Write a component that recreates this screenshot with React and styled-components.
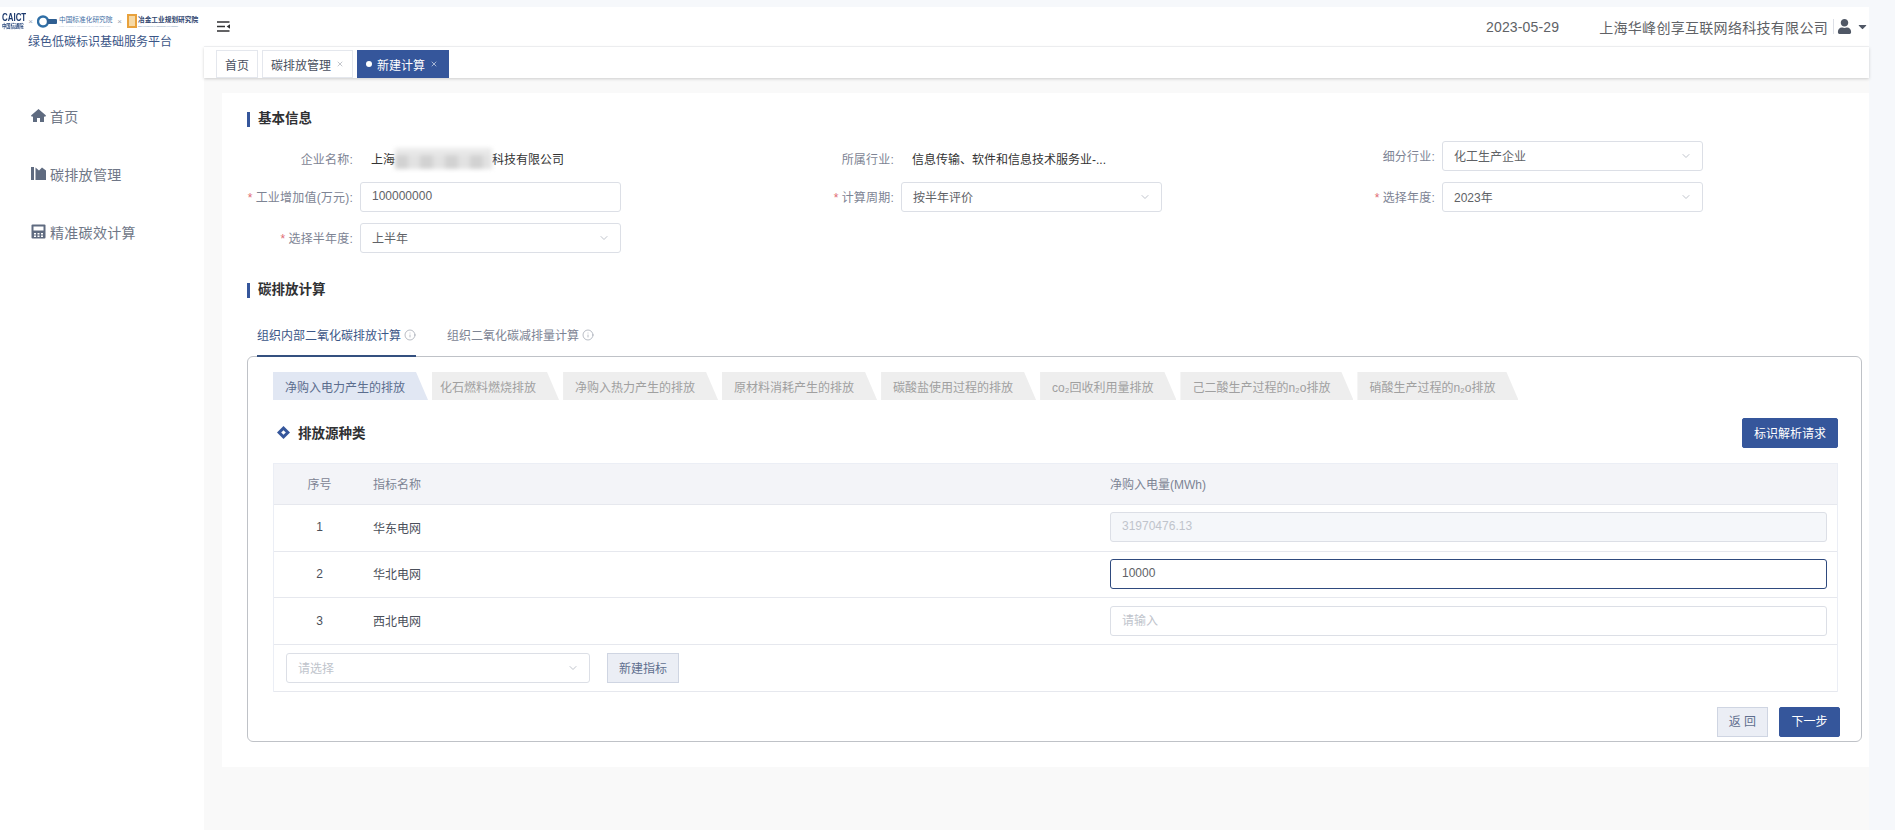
import React from "react";
import styled, { createGlobalStyle } from "styled-components";
import { ChevronDown, Info, X } from "lucide-react";
import { FaCaretDown, FaUser } from "react-icons/fa";

const PRIMARY = "#35569b";
const FONT = '"Liberation Sans", "Noto Sans CJK SC", sans-serif';

const GlobalStyle = createGlobalStyle`
  html, body {
    margin: 0;
    padding: 0;
    font-family: ${FONT};
    background: #f6f8fb;
  }
  * {
    box-sizing: border-box;
  }
`;

const Shell = styled.div`
  display: grid;
  grid-template-columns: 204px 1fr;
  height: 830px;
  padding-top: 7px;
  overflow: hidden;
  background: #f6f8fb;
`;

const Sidebar = styled.aside`
  background: #fff;
  padding-top: 5px;
  overflow: hidden;
`;

const LogoRow = styled.div`
  display: flex;
  align-items: center;
  height: 18px;
  padding-left: 2px;
`;

const Caict = styled.div`
  width: 22px;
  flex: none;
  color: #1c3a6e;
  font-size: 11px;
  font-weight: 700;
  line-height: 10px;
  white-space: nowrap;
  transform: scaleX(0.72);
  transform-origin: left center;
`;

const CaictSub = styled.div`
  font-size: 6px;
  line-height: 8px;
  color: #28477c;
`;

const LogoTimes = styled.span`
  width: 13px;
  flex: none;
  text-align: center;
  font-size: 8px;
  color: #9aa4b5;
`;

const Institute = styled.div`
  width: 54px;
  flex: none;
  margin-left: 2px;
  font-family: "Liberation Serif", "Noto Sans CJK SC", serif;
  font-size: 6.7px;
  line-height: 9px;
  color: #3c6da3;
  white-space: nowrap;
`;

const InstituteSub = styled.div`
  font-size: 2.1px;
  line-height: 4px;
  color: #8aa2bd;
`;

const Metallurgy = styled.div`
  width: 60px;
  flex: none;
  margin-left: 1px;
  font-size: 6.7px;
  font-weight: 700;
  line-height: 9px;
  color: #30456e;
  white-space: nowrap;
`;

const Brand = styled.div`
  margin-top: 3px;
  padding-left: 28px;
  font-size: 12px;
  line-height: 18px;
  color: #3b5687;
  white-space: nowrap;
`;

const Nav = styled.nav`
  display: flex;
  flex-direction: column;
  gap: 37px;
  margin-top: 54px;
  padding-left: 31px;
`;

const NavItem = styled.div`
  display: flex;
  align-items: center;
  gap: 4px;
  height: 21px;
  font-size: 14px;
  letter-spacing: 0.3px;
  color: #6f7787;
  svg {
    width: 15px;
    height: 15px;
    color: #5f6b80;
    flex: none;
  }
`;

const Main = styled.main`
  display: flex;
  flex-direction: column;
  min-width: 0;
  margin-right: 26px;
  background: #f9f9f9;
`;

const Header = styled.header`
  display: flex;
  align-items: center;
  height: 40px;
  padding-left: 13px;
  background: #fff;
  border-bottom: 1px solid #f3f4f6;
  color: #606266;
  font-size: 14px;
`;

const HeaderDate = styled.span`
  margin-left: auto;
  letter-spacing: 0.15px;
`;

const Company = styled.span`
  margin-left: 40px;
  letter-spacing: 0.3px;
`;

const UserMenu = styled.div`
  display: flex;
  align-items: center;
  height: 15px;
  margin-left: 5px;
  padding-left: 3px;
  border-left: 1px solid #dcdfe6;
  color: #505866;
`;

const Caret = styled.span`
  display: flex;
  margin-left: 4px;
`;

const TabBar = styled.div`
  display: flex;
  align-items: flex-end;
  gap: 4px;
  height: 31px;
  padding-left: 12px;
  background: #fff;
  box-shadow: 0 1px 3px rgba(0, 0, 0, 0.18);
`;

const PageTab = styled.div`
  display: flex;
  align-items: center;
  gap: 5px;
  height: 28px;
  padding: 0 ${props => (props.$active ? "10px" : "8px")} 0 8px;
  border: 1px solid ${props => (props.$active ? PRIMARY : "#e4e7ed")};
  background: ${props => (props.$active ? PRIMARY : "#fff")};
  color: ${props => (props.$active ? "#fff" : "#495060")};
  font-size: 12px;
  white-space: nowrap;
`;

const Dot = styled.i`
  width: 6px;
  height: 6px;
  border-radius: 50%;
  background: #fff;
`;

const Card = styled.section`
  margin: 15px 0 0 18px;
  padding: 19px 7px 25px 25px;
  background: #fff;
`;

const SectionTitle = styled.h2`
  margin: ${props => (props.$spaced ? "30px" : "0")} 0 0;
  padding: 0 0 2px 8px;
  border-left: 3px solid ${PRIMARY};
  font-size: 13.5px;
  font-weight: 700;
  line-height: 13px;
  color: #303133;
`;

const FormGrid = styled.div`
  display: grid;
  grid-template-columns: repeat(3, 541px);
  row-gap: 11px;
  margin-top: 14px;
`;

const Field = styled.div`
  display: flex;
  align-items: center;
  height: 30px;
`;

const FieldLabel = styled.label`
  width: 106px;
  margin-right: 7px;
  flex: none;
  text-align: right;
  font-size: 12px;
  letter-spacing: 0.2px;
  color: #7d8494;
  white-space: nowrap;
  transform: translateY(${props => (props.$text ? "2px" : "-1px")});
`;

const Star = styled.span`
  margin-right: 3px;
  color: #e06c75;
`;

const FieldText = styled.div`
  display: flex;
  align-items: center;
  padding-left: 11px;
  font-size: 12px;
  color: #333;
  white-space: nowrap;
  transform: translateY(2px);
`;

const Mosaic = styled.span`
  display: inline-block;
  width: 97px;
  height: 21px;
  background:
    linear-gradient(#e9e9e9 0 35%, transparent 35%),
    repeating-linear-gradient(90deg, #d2d2d2 0 13px, #e2e2e2 13px 25px);
  filter: blur(2px);
`;

const Control = styled.div`
  display: flex;
  align-items: center;
  justify-content: space-between;
  width: ${props => props.$width || "261px"};
  height: 30px;
  padding: 0 10px 2px 11px;
  border: 1px solid ${props => (props.$focused ? "#2f4a7e" : "#dcdfe6")};
  border-radius: 3px;
  background: ${props => (props.$disabled ? "#f5f7fa" : "#fff")};
  color: ${props => (props.$muted ? "#c0c4cc" : "#606266")};
  font-size: 12px;
  svg {
    margin-bottom: -2px;
    color: #c0c4cc;
  }
`;

const InnerTabs = styled.div`
  display: flex;
  gap: 31px;
  height: 40px;
  margin-top: 19px;
  padding-left: 10px;
`;

const InnerTab = styled.div`
  display: flex;
  align-items: center;
  gap: 3px;
  position: relative;
  z-index: 1;
  height: 40px;
  padding-bottom: 3px;
  border-bottom: 2px solid ${props => (props.$active ? "#34507f" : "transparent")};
  color: ${props => (props.$active ? "#3b5687" : "#7d8494")};
  font-size: 12px;
  svg {
    color: #8a919e;
  }
`;

const Panel = styled.div`
  margin-top: -1px;
  padding: 15px 23px 4px 25px;
  border: 1px solid #bfc2c7;
  border-radius: 6px;
`;

const StepTabs = styled.div`
  display: flex;
  gap: 4px;
`;

const StepTab = styled.div`
  height: 28px;
  padding: 0 23px 0 ${props => props.$left || 12}px;
  background: ${props => (props.$active ? "#e1e7f3" : "#eeeeee")};
  clip-path: polygon(0 0, calc(100% - 12px) 0, 100% 100%, 0 100%);
  color: ${props => (props.$active ? "#5b6d8e" : "#a0a0a0")};
  font-size: 12px;
  line-height: 32px;
  white-space: nowrap;
`;

const SourceBar = styled.div`
  display: flex;
  align-items: center;
  justify-content: space-between;
  margin-top: 18px;
`;

const SourceTitle = styled.div`
  display: flex;
  align-items: center;
  gap: 8px;
  padding: 0 0 2px 4px;
  font-size: 13.5px;
  font-weight: 700;
  color: #303133;
`;

const Button = styled.button`
  height: 30px;
  padding: 0 ${props => props.$pad || 11}px 2px;
  border: 1px solid ${props => (props.$ghost ? "#cfd5e2" : PRIMARY)};
  border-radius: ${props => (props.$ghost ? "0" : "2px")};
  background: ${props => (props.$ghost ? "#ebeef5" : PRIMARY)};
  color: ${props => (props.$ghost ? "#5f6f8f" : "#fff")};
  font-family: ${FONT};
  font-size: 12px;
  white-space: nowrap;
`;

const Table = styled.div`
  margin-top: 15px;
  border: 1px solid #ebeef5;
  border-bottom: 0;
`;

const Row = styled.div`
  display: grid;
  grid-template-columns: 91px 735px 1fr;
  align-items: center;
  height: ${props => (props.$head ? "41px" : "46.67px")};
  padding-bottom: 1px;
  border-bottom: 1px solid #e6e8ee;
  background: ${props => (props.$head ? "#f3f4f8" : "#fff")};
  color: ${props => (props.$head ? "#7d8494" : "#4a4f5a")};
  font-size: 12px;
`;

const IndexCell = styled.div`
  text-align: center;
`;

const NameCell = styled.div`
  padding-left: 8px;
`;

const ValueCell = styled.div`
  padding: 0 10px;
`;

const AddRow = styled.div`
  display: flex;
  align-items: center;
  gap: 17px;
  height: 47px;
  padding: 1px 0 0 12px;
  border-bottom: 1px solid #e6e8ee;
`;

const Footer = styled.div`
  display: flex;
  justify-content: flex-end;
  gap: 11px;
  margin: 15px -2px 0 0;
`;

const OrangeMark = styled.span`
  width: 10px;
  height: 14px;
  flex: none;
  margin-left: 1px;
  border: 2px solid #e8a13c;
  background: #f6d9a6;
`;

const HamburgerIcon = () => (
  <svg width="13" height="11" viewBox="0 0 13 11" fill="none">
    <path d="M0 1h12.5M0 5.5h8M0 10h12.5" stroke="#303133" strokeWidth="1.6" />
    <path d="M13 3.2v4.6L9.6 5.5z" fill="#303133" />
  </svg>
);

const HomeIcon = () => (
  <svg viewBox="0 0 15 15" fill="currentColor">
    <path d="M7.5 1L0 7.5 1 9l1-.8V14h4v-4h3v4h4V8.2l1 .8 1-1.5z" />
  </svg>
);

const FactoryIcon = () => (
  <svg viewBox="0 0 15 15" fill="currentColor">
    <rect x="0" y="1" width="3" height="13" />
    <path d="M4.5 14V1.5L8 4.5 11 1.5l4 3V14z" />
  </svg>
);

const CalculatorIcon = () => (
  <svg viewBox="0 0 15 15">
    <rect x="0.5" y="0.5" width="14" height="14" rx="1" fill="currentColor" />
    <rect x="2.5" y="2.5" width="10" height="4" fill="#fff" />
    <path d="M3 9h2v1.6H3zM6.5 9h2v1.6h-2zM10 9h2v1.6h-2zM3 11.4h2V13H3zM6.5 11.4h2V13h-2zM10 11.4h2V13h-2z" fill="#fff" />
  </svg>
);

const KeyLogo = () => (
  <svg width="20" height="13" viewBox="0 0 20 13" style={{ flex: "none" }}>
    <circle cx="6" cy="6.5" r="5" fill="none" stroke="#2f6fa6" strokeWidth="2.4" />
    <rect x="10" y="4" width="10" height="5" rx="1" fill="#2f5f92" />
  </svg>
);

const DiamondIcon = () => (
  <svg width="13" height="13" viewBox="0 0 13 13">
    <path d="M6.5 0L13 6.5 6.5 13 0 6.5z" fill={PRIMARY} />
    <path d="M6.5 4.2L8.8 6.5 6.5 8.8 4.2 6.5z" fill="#fff" />
  </svg>
);

const SelectField = ({ value, width, muted }) => (
  <Control $width={width} $muted={muted}>
    {value}
    <ChevronDown size={12} />
  </Control>
);

const FormField = ({ label, required, text, children }) => (
  <Field>
    <FieldLabel $text={text}>
      {required && <Star>*</Star>}
      {label}:
    </FieldLabel>
    {children}
  </Field>
);

const stepTabs = [
  { label: "净购入电力产生的排放", active: true },
  { label: "化石燃料燃烧排放", left: 8 },
  { label: "净购入热力产生的排放" },
  { label: "原材料消耗产生的排放" },
  { label: "碳酸盐使用过程的排放" },
  { label: "co₂回收利用量排放" },
  { label: "己二酸生产过程的n₂o排放" },
  { label: "硝酸生产过程的n₂o排放" }
];

const App = () => (
  <>
    <GlobalStyle />
    <Shell>
      <Sidebar>
        <LogoRow>
          <Caict>
            CAICT
            <CaictSub>中国信通院</CaictSub>
          </Caict>
          <LogoTimes>×</LogoTimes>
          <KeyLogo />
          <Institute>
            中国标准化研究院
            <InstituteSub>CHINA NATIONAL INSTITUTE OF STANDARDIZATION</InstituteSub>
          </Institute>
          <LogoTimes>×</LogoTimes>
          <OrangeMark />
          <Metallurgy>
            冶金工业规划研究院
            <InstituteSub>METALLURGICAL INDUSTRY PLANNING</InstituteSub>
          </Metallurgy>
        </LogoRow>
        <Brand>绿色低碳标识基础服务平台</Brand>
        <Nav>
          <NavItem>
            <HomeIcon />
            首页
          </NavItem>
          <NavItem>
            <FactoryIcon />
            碳排放管理
          </NavItem>
          <NavItem>
            <CalculatorIcon />
            精准碳效计算
          </NavItem>
        </Nav>
      </Sidebar>
      <Main>
        <Header>
          <HamburgerIcon />
          <HeaderDate>2023-05-29</HeaderDate>
          <Company>上海华峰创享互联网络科技有限公司</Company>
          <UserMenu>
            <FaUser size={15} />
            <Caret>
              <FaCaretDown size={13} />
            </Caret>
          </UserMenu>
        </Header>
        <TabBar>
          <PageTab>首页</PageTab>
          <PageTab>
            碳排放管理
            <X size={8} color="#a5a9b2" />
          </PageTab>
          <PageTab $active>
            <Dot />
            新建计算
            <X size={8} color="#dfe5f2" />
          </PageTab>
        </TabBar>
        <Card>
          <SectionTitle>基本信息</SectionTitle>
          <FormGrid>
            <FormField label="企业名称" text>
              <FieldText>
                上海
                <Mosaic />
                科技有限公司
              </FieldText>
            </FormField>
            <FormField label="所属行业" text>
              <FieldText>信息传输、软件和信息技术服务业-...</FieldText>
            </FormField>
            <FormField label="细分行业">
              <SelectField value="化工生产企业" />
            </FormField>
            <FormField label="工业增加值(万元)" required>
              <Control>100000000</Control>
            </FormField>
            <FormField label="计算周期" required>
              <SelectField value="按半年评价" />
            </FormField>
            <FormField label="选择年度" required>
              <SelectField value="2023年" />
            </FormField>
            <FormField label="选择半年度" required>
              <SelectField value="上半年" />
            </FormField>
          </FormGrid>
          <SectionTitle $spaced>碳排放计算</SectionTitle>
          <InnerTabs>
            <InnerTab $active>
              组织内部二氧化碳排放计算
              <Info size={12} strokeWidth={1.2} />
            </InnerTab>
            <InnerTab>
              组织二氧化碳减排量计算
              <Info size={12} strokeWidth={1.2} />
            </InnerTab>
          </InnerTabs>
          <Panel>
            <StepTabs>
              {stepTabs.map(tab => (
                <StepTab key={tab.label} $active={tab.active} $left={tab.left}>
                  {tab.label}
                </StepTab>
              ))}
            </StepTabs>
            <SourceBar>
              <SourceTitle>
                <DiamondIcon />
                排放源种类
              </SourceTitle>
              <Button>标识解析请求</Button>
            </SourceBar>
            <Table>
              <Row $head>
                <IndexCell>序号</IndexCell>
                <NameCell>指标名称</NameCell>
                <ValueCell>净购入电量(MWh)</ValueCell>
              </Row>
              <Row>
                <IndexCell>1</IndexCell>
                <NameCell>华东电网</NameCell>
                <ValueCell>
                  <Control $width="100%" $disabled $muted>
                    31970476.13
                  </Control>
                </ValueCell>
              </Row>
              <Row>
                <IndexCell>2</IndexCell>
                <NameCell>华北电网</NameCell>
                <ValueCell>
                  <Control $width="100%" $focused>
                    10000
                  </Control>
                </ValueCell>
              </Row>
              <Row>
                <IndexCell>3</IndexCell>
                <NameCell>西北电网</NameCell>
                <ValueCell>
                  <Control $width="100%" $muted>
                    请输入
                  </Control>
                </ValueCell>
              </Row>
              <AddRow>
                <SelectField value="请选择" width="304px" muted />
                <Button $ghost $pad={11}>
                  新建指标
                </Button>
              </AddRow>
            </Table>
            <Footer>
              <Button $ghost $pad={11}>
                返 回
              </Button>
              <Button $pad={11.5}>下一步</Button>
            </Footer>
          </Panel>
        </Card>
      </Main>
    </Shell>
  </>
);

export default App;
